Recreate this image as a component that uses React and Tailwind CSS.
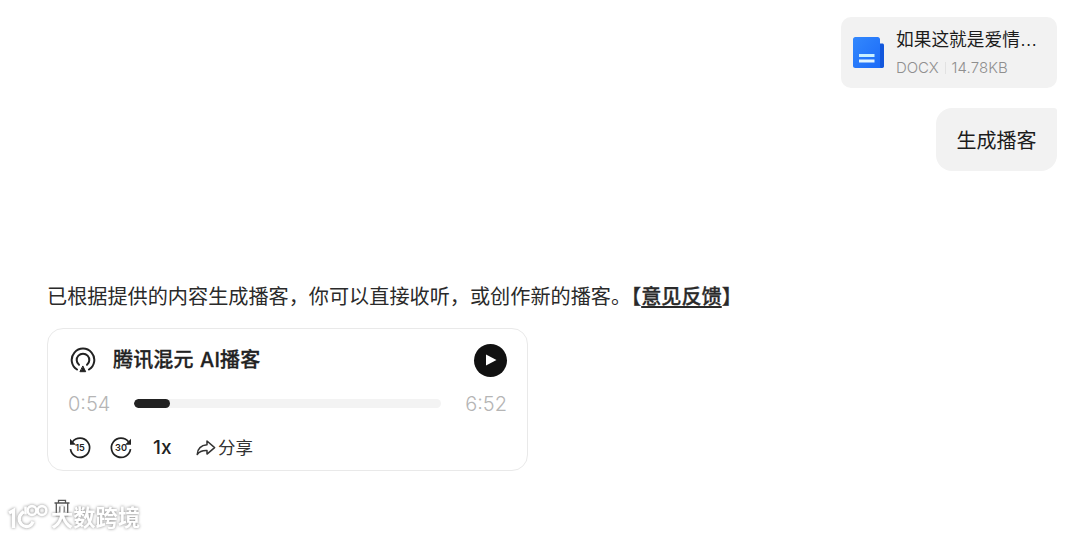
import React from 'react';

const DocIcon = () => (
    <svg width="32" height="33" viewBox="0 0 32 33" fill="none" className="shrink-0">
        <defs>
            <linearGradient id="docFront" x1="0" y1="0" x2="1" y2="1">
                <stop offset="0" stopColor="#3388fd" />
                <stop offset="1" stopColor="#1b6bf8" />
            </linearGradient>
        </defs>
        <path d="M25 7.5h4.300c1 0 1.700.7 1.700 1.700v21.100c0 1-.7 1.700-1.700 1.700H22z" fill="#1257dc" />
        <path d="M2.300 1h22.400c1.300 0 2.300 1 2.300 2.300V30c0 .9.2 1.500.8 2H2.300C1 32 0 31 0 29.700V3.300C0 2 1 1 2.300 1z" fill="url(#docFront)" />
        <path d="M6 18h15.500v3H6z" fill="#c9f0ff" />
        <path d="M6 23.500h15.500v3H6z" fill="#e2f5ff" />
    </svg>
);

const PodcastIcon = () => (
    <svg width="26" height="26" viewBox="0 0 26 26" fill="none" stroke="#222" strokeWidth="2" strokeLinecap="round">
        <path d="M7 22.500A11.300 11.300 0 1 1 19 22.500" />
        <path d="M9 17.800A6.300 6.300 0 1 1 17 17.800" />
        <path d="M13 19.300l2.700 5.400h-5.400z" fill="#222" strokeWidth="1" strokeLinejoin="round" />
    </svg>
);

const SeekIcon = ({ seconds, forward }) => (
    <svg width="24" height="24" viewBox="0 0 24 24" fill="none">
        <g transform={forward ? 'matrix(-1 0 0 1 24 0)' : undefined}>
            <path d="M4.500 5.800A9.600 9.600 0 1 1 2.500 13.200" stroke="#222" strokeWidth="1.700" />
            <path d="M2 2.800v6h6z" fill="#222" />
        </g>
        <text x="12" y="15.300" textAnchor="middle" fontSize="9.200" fontWeight="600" fill="#222" className="font-['Inter']">{seconds}</text>
    </svg>
);

const ShareIcon = () => (
    <svg width="20" height="18" viewBox="0 0 20 18" fill="none" stroke="#333" strokeWidth="1.500" strokeLinejoin="round">
        <path d="M11 2v3.800C5.500 6.300 1.600 9.500 1.200 15.500 3.300 12.500 6.500 11.300 11 11.500v3.600l7.600-6.500z" />
    </svg>
);

const TrashIcon = () => (
    <svg width="16" height="18" viewBox="0 0 16 18" fill="none" stroke="#555" strokeWidth="1.300">
        <path d="M0.500 4h15M4.500 4V1.300h7V4M2.300 4v12.700h11.400V4M6 7.500v5.500M10 7.500v5.500" />
    </svg>
);

const Watermark = () => (
    <div className="absolute left-2 top-[500px] flex items-center drop-shadow-[0_0_1.500px_#888]">
        <svg width="40" height="30" viewBox="0 0 40 30" fill="none" stroke="#fff" strokeWidth="3.400">
            <path d="M1 11l4.500-2.500V26M16 9.500c-4.500 3-5.500 6-4.500 9.500 2.500 7 11 7.500 13.500 0.500" />
            <path d="M17.500 4.500v8" strokeWidth="2.600" />
            <circle cx="24" cy="8.500" r="4.400" strokeWidth="2.600" />
            <circle cx="34" cy="8.500" r="4.400" strokeWidth="2.600" />
        </svg>
        <span className="mt-1 ml-[3px] text-[22.300px] leading-[30px] font-bold text-white">大数跨境</span>
    </div>
);

const FileCard = ({ name, type, size }) => (
    <div className="flex h-[71px] w-[216px] items-center rounded-[10px] bg-[#f2f2f2] pl-3">
        <DocIcon />
        <div className="ml-[11px] pt-[2px]">
            <div className="text-[17.700px] leading-6 whitespace-nowrap text-[#1c1c1c]">{name}</div>
            <div className="mt-1 flex items-center font-['Inter'] text-[15px] leading-6 font-light text-[#8f8f8f]">
                <span className="tracking-[-0.100px]">{type}</span>
                <span className="mx-[6px] h-3 w-px bg-[#e2e2e2]" />
                <span className="tracking-[0.100px]">{size}</span>
            </div>
        </div>
    </div>
);

const Player = ({ title, current, total, progress }) => (
    <div className="mt-4 h-[143px] w-[481px] rounded-2xl border border-[#e9e9e9] px-5 pt-[15px]">
        <div className="flex h-8 items-center">
            <div className="ml-[2px]"><PodcastIcon /></div>
            <span className="ml-[17px] font-['Inter','Noto_Sans_CJK_SC',sans-serif] text-[20px] font-medium tracking-[0.150px] [word-spacing:1px] text-[#222] [-webkit-text-stroke:0.300px_#222]">{title}</span>
            <button className="ml-auto flex size-[33px] items-center justify-center rounded-full bg-[#111]">
                <svg width="12" height="12" viewBox="0 0 12 12" fill="#fff" className="ml-px">
                    <path d="M1 .500l10.500 5.500L1 11.500z" />
                </svg>
            </button>
        </div>
        <div className="mt-3 flex h-[30px] items-center font-['Inter'] text-[20px] font-light text-[#b5b5b5]">
            <span className="w-[66px] pt-[2px]">{current}</span>
            <div className="h-[9px] w-[307px] overflow-hidden rounded-full bg-[#f3f3f3]">
                <div className="h-full rounded-full bg-[#222]" style={{ width: `${progress}%` }} />
            </div>
            <span className="ml-auto pt-[2px]">{total}</span>
        </div>
        <div className="mt-[15px] flex h-[30px] items-center text-[#222]">
            <SeekIcon seconds="15" />
            <div className="ml-[17px]"><SeekIcon seconds="30" forward /></div>
            <span className="ml-5 w-[21px] font-['Inter'] text-[19px] font-medium">1x</span>
            <div className="ml-[22px] flex items-center gap-[2px]">
                <ShareIcon />
                <span className="text-[17.500px] text-[#333]">分享</span>
            </div>
        </div>
    </div>
);

const App = () => {
    return (
        <div className="relative h-[536px] w-[1080px] overflow-hidden bg-white font-['Liberation_Sans','Noto_Sans_CJK_SC',sans-serif]">
            <div className="flex flex-col items-end pt-[17px] pr-[23px]">
                <FileCard name="如果这就是爱情…" type="DOCX" size="14.78KB" />
                <div className="mt-5 flex h-[63px] w-[121px] items-center justify-center rounded-[16px] rounded-tr-[3px] bg-[#f2f2f2] pt-[2px] text-[20px] text-[#1c1c1c]">
                    生成播客
                </div>
            </div>
            <div className="pt-[111px] pl-[47px]">
                <p className="text-[20.150px] leading-[30px] whitespace-nowrap text-[#2a2a2a]">
                    已根据提供的内容生成播客，你可以直接收听，或创作新的播客。
                    <span className="font-medium [-webkit-text-stroke:0.300px_#2a2a2a]">【<a className="underline decoration-2 underline-offset-2">意见反馈</a>】</span>
                </p>
                <Player title="腾讯混元 AI播客" current="0:54" total="6:52" progress={11.7} />
                <div className="mt-7 ml-[7px]"><TrashIcon /></div>
            </div>
            <Watermark />
        </div>
    );
};

export default App;
